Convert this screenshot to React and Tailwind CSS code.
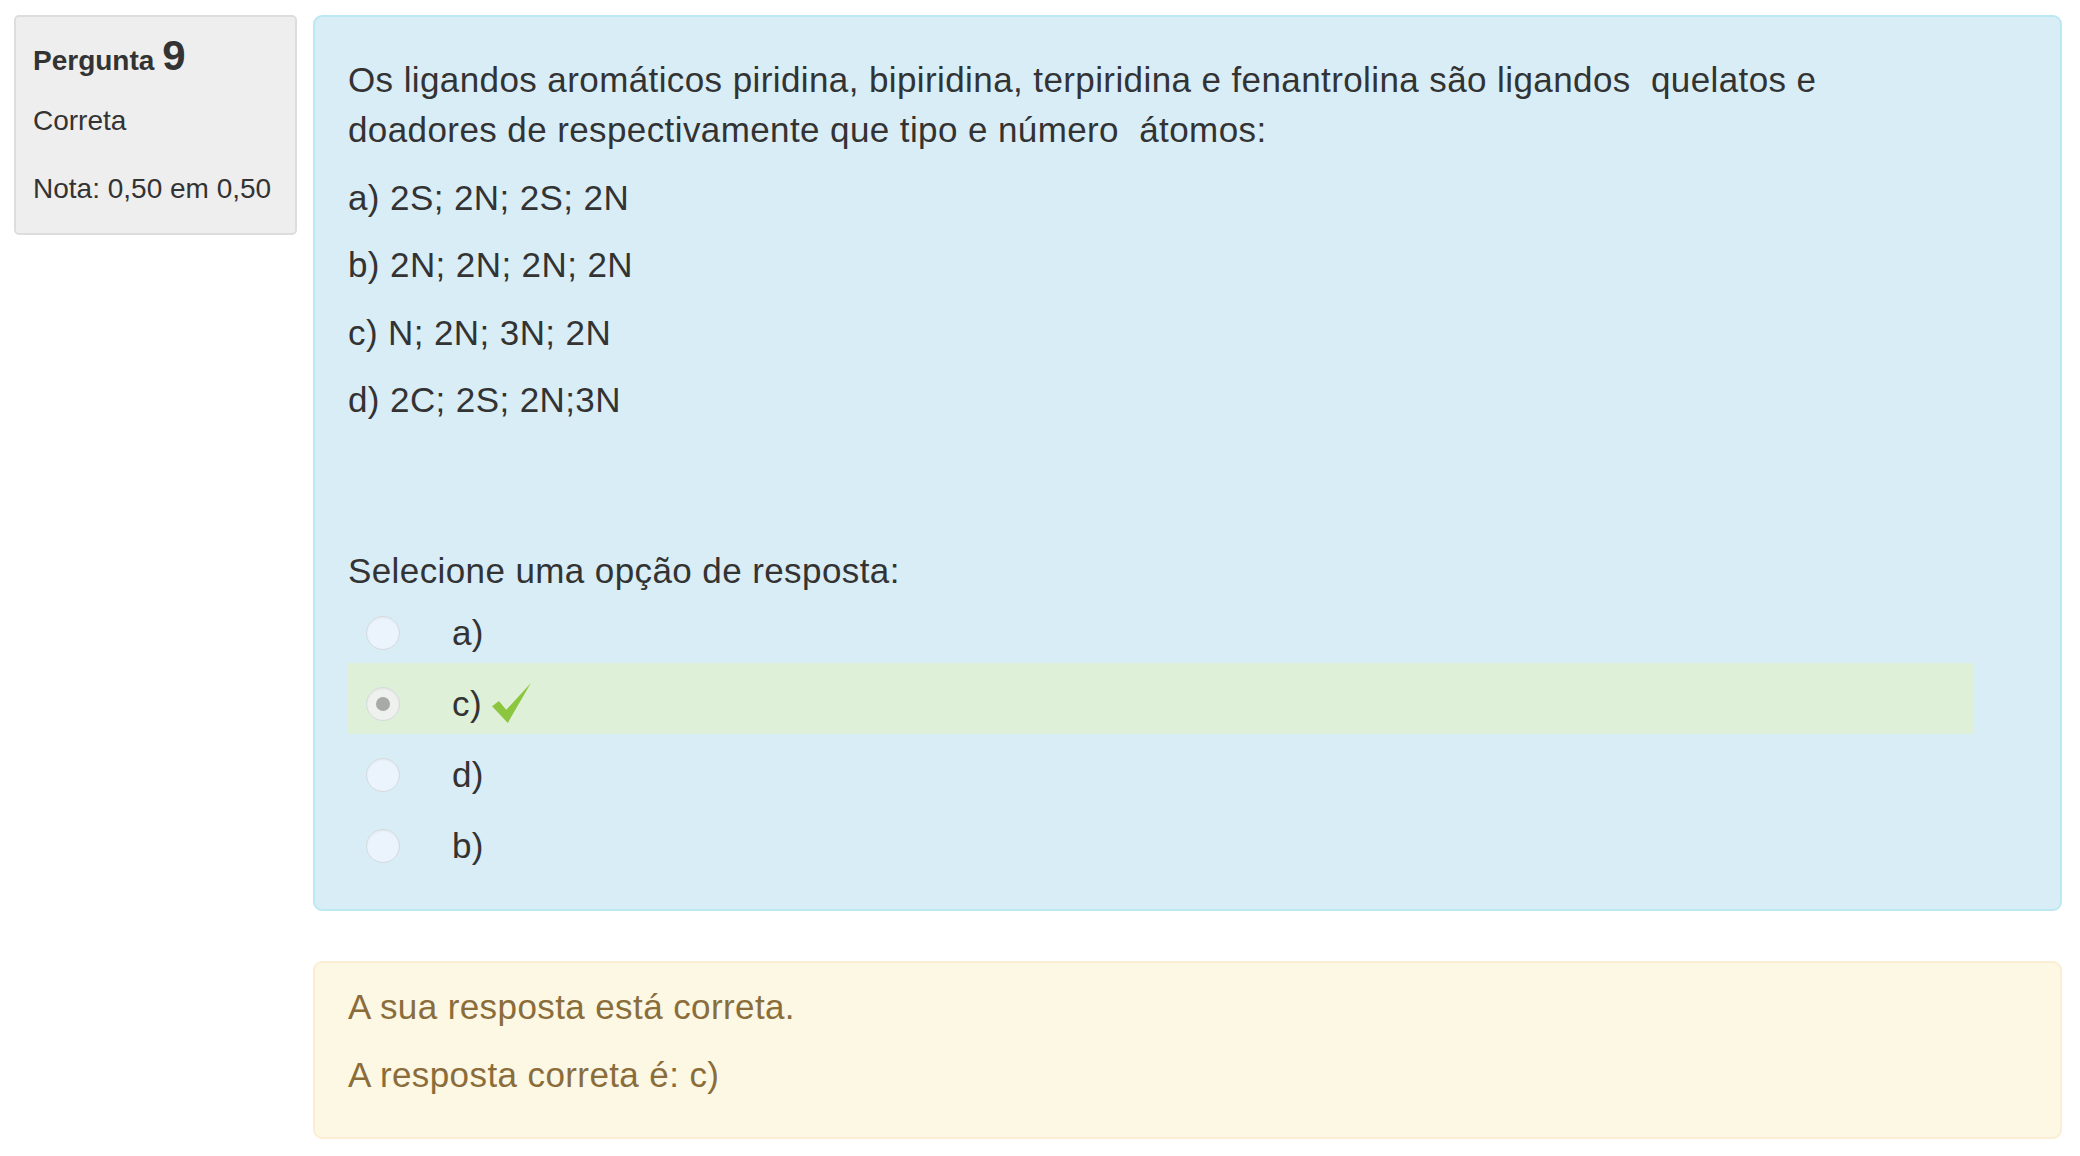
import React from "react";

function Radio({ checked }) {
  return (
    <div
      className={
        "w-[34px] h-[34px] rounded-full border-[1.5px] border-[#d5dadd] flex items-center justify-center shrink-0 " +
        (checked
          ? "bg-[#eef1ed] shadow-[inset_0_1px_2px_rgba(0,0,0,0.06)]"
          : "bg-[#ebf4fc] shadow-[inset_0_1px_2px_rgba(0,0,0,0.05)]")
      }
    >
      {checked && <div className="w-[14px] h-[14px] rounded-full bg-[#a8aaa8]" />}
    </div>
  );
}

function Check() {
  return (
    <svg width="42" height="42" viewBox="0 0 40 40" className="shrink-0">
      <polygon points="1,23 7.5,18 14.5,26.5 38,1 16,39" fill="#8cc63f" />
    </svg>
  );
}

function Option({ label, checked, correct }) {
  return (
    <div
      className={
        "h-[71px] pt-[10px] flex items-center pl-[19px] " +
        (correct ? "bg-[#dff0d8]" : "")
      }
    >
      <Radio checked={checked} />
      <div className="ml-[52px] flex items-center">
        <span>{label}</span>
        {correct && (
          <span className="ml-[9px] -mt-[2px] flex">
            <Check />
          </span>
        )}
      </div>
    </div>
  );
}

export default function App() {
  return (
    <div
      className="min-h-[1156px] bg-white text-[#333333] flex items-start pl-[14px] pr-[18px] pt-[15px]"
      style={{ fontFamily: '"Liberation Sans", Arial, sans-serif' }}
    >
      {/* Info box */}
      <div className="w-[283px] shrink-0 bg-[#eeeeee] border-2 border-[#dddddd] rounded-[5px] pl-[17px] pt-[18px] pb-[24px] text-[28px]">
        <h3 className="font-bold leading-[50px] m-0">
          Pergunta <span className="text-[42px] leading-none">9</span>
        </h3>
        <div className="leading-[40px] mt-[15px]">Correta</div>
        <div className="leading-[40px] mt-[28px]">Nota: 0,50 em 0,50</div>
      </div>

      {/* Main column */}
      <div className="flex-1 ml-[16px] flex flex-col">
        <div className="bg-[#d9edf7] border-2 border-[#bce8f1] rounded-[9px] pl-[33px] pr-[87px] pt-[38px] pb-[33px] text-[35px] leading-[50px] tracking-[0.4px]">
          <p className="mb-[17.5px]">
            Os ligandos aromáticos piridina, bipiridina, terpiridina e fenantrolina são ligandos{"\u00a0"} quelatos e
            <br />
            doadores de respectivamente que tipo e número{"\u00a0"} átomos:
          </p>
          <p className="mb-[17.5px]">a) 2S; 2N; 2S; 2N</p>
          <p className="mb-[17.5px]">b) 2N; 2N; 2N; 2N</p>
          <p className="mb-[17.5px]">c) N; 2N; 3N; 2N</p>
          <p className="mb-[17.5px]">d) 2C; 2S; 2N;3N</p>

          <div className="mt-[121px]">Selecione uma opção de resposta:</div>
          <div className="-ml-[1px] -mt-[4px]">
            <Option label="a)" />
            <Option label="c)" checked correct />
            <Option label="d)" />
            <Option label="b)" />
          </div>
        </div>

        <div className="mt-[50px] bg-[#fcf8e3] border-2 border-[#fbeed5] rounded-[9px] pl-[33px] pt-[19px] pb-[20px] text-[35px] leading-[50px] tracking-[0.4px] text-[#8a6d3b]">
          <p className="mb-[17.5px]">A sua resposta está correta.</p>
          <p className="mb-[17.5px]">A resposta correta é: c)</p>
        </div>
      </div>
    </div>
  );
}
